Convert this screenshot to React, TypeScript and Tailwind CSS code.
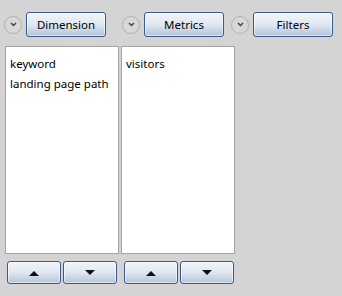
const font = { fontFamily: '"Segoe UI", "Noto Sans", "Open Sans", sans-serif' };

const ExpandCircle = () => (
  <div className="w-[18px] h-[18px] rounded-full border border-[#b0b0b0] bg-[#d8d8d8] flex items-center justify-center">
    <svg width="7" height="5" viewBox="0 0 7 5">
      <path d="M1 1 L3.5 3.5 L6 1" fill="none" stroke="#444" strokeWidth="1.5" />
    </svg>
  </div>
);

const BlueButton = ({ label, className }: { label?: string; className: string }) => (
  <button
    className={`${className} rounded-[3px] border border-[#3c5a87] bg-gradient-to-b from-[#f2f5fa] via-[#dfe7f2] to-[#b3c4dc] text-[11.5px] text-black flex items-center justify-center pt-[1px] shadow-[inset_0_0_0_1px_rgba(255,255,255,0.55)]`}
  >
    {label}
  </button>
);

const Arrow = ({ up }: { up: boolean }) => (
  <svg width="10" height="6" viewBox="0 0 10 6">
    {up ? <path d="M0 6 L5 1 L10 6 Z" fill="#111" /> : <path d="M0 0 L10 0 L5 5 Z" fill="#111" />}
  </svg>
);

const SmallButton = ({ up }: { up: boolean }) => (
  <button className="w-[54px] h-[23px] rounded-[3px] border border-[#3c5a87] bg-gradient-to-b from-[#f2f5fa] via-[#dfe7f2] to-[#b3c4dc] flex items-center justify-center shadow-[inset_0_0_0_1px_rgba(255,255,255,0.55)]">
    <Arrow up={up} />
  </button>
);

const Header = ({ label }: { label: string }) => (
  <div className="flex items-center gap-[4px]">
    <ExpandCircle />
    <BlueButton label={label} className="w-[80px] h-[25px]" />
  </div>
);

const ListBox = ({ items }: { items: string[] }) => (
  <div className="w-[114px] h-[208px] bg-white border border-[#a3a3a3] pt-[7px] pl-[4px] text-[11.5px] text-black leading-[20px]">
    {items.map((item) => (
      <div key={item}>{item}</div>
    ))}
  </div>
);

export default function App() {
  return (
    <div className="w-[342px] h-[296px] bg-[#d4d4d4] relative" style={font}>
      <div className="flex pt-[12px] pl-[4px]">
        <Header label="Dimension" />
        <div className="ml-[16px]">
          <Header label="Metrics" />
        </div>
        <div className="ml-[7px]">
          <Header label="Filters" />
        </div>
      </div>
      <div className="flex gap-[2px] pl-[5px] mt-[9px]">
        <ListBox items={["keyword", "landing page path"]} />
        <ListBox items={["visitors"]} />
      </div>
      <div className="flex pl-[7px] mt-[7px]">
        <div className="flex gap-[2px]">
          <SmallButton up />
          <SmallButton up={false} />
        </div>
        <div className="flex gap-[2px] ml-[7px]">
          <SmallButton up />
          <SmallButton up={false} />
        </div>
      </div>
    </div>
  );
}
